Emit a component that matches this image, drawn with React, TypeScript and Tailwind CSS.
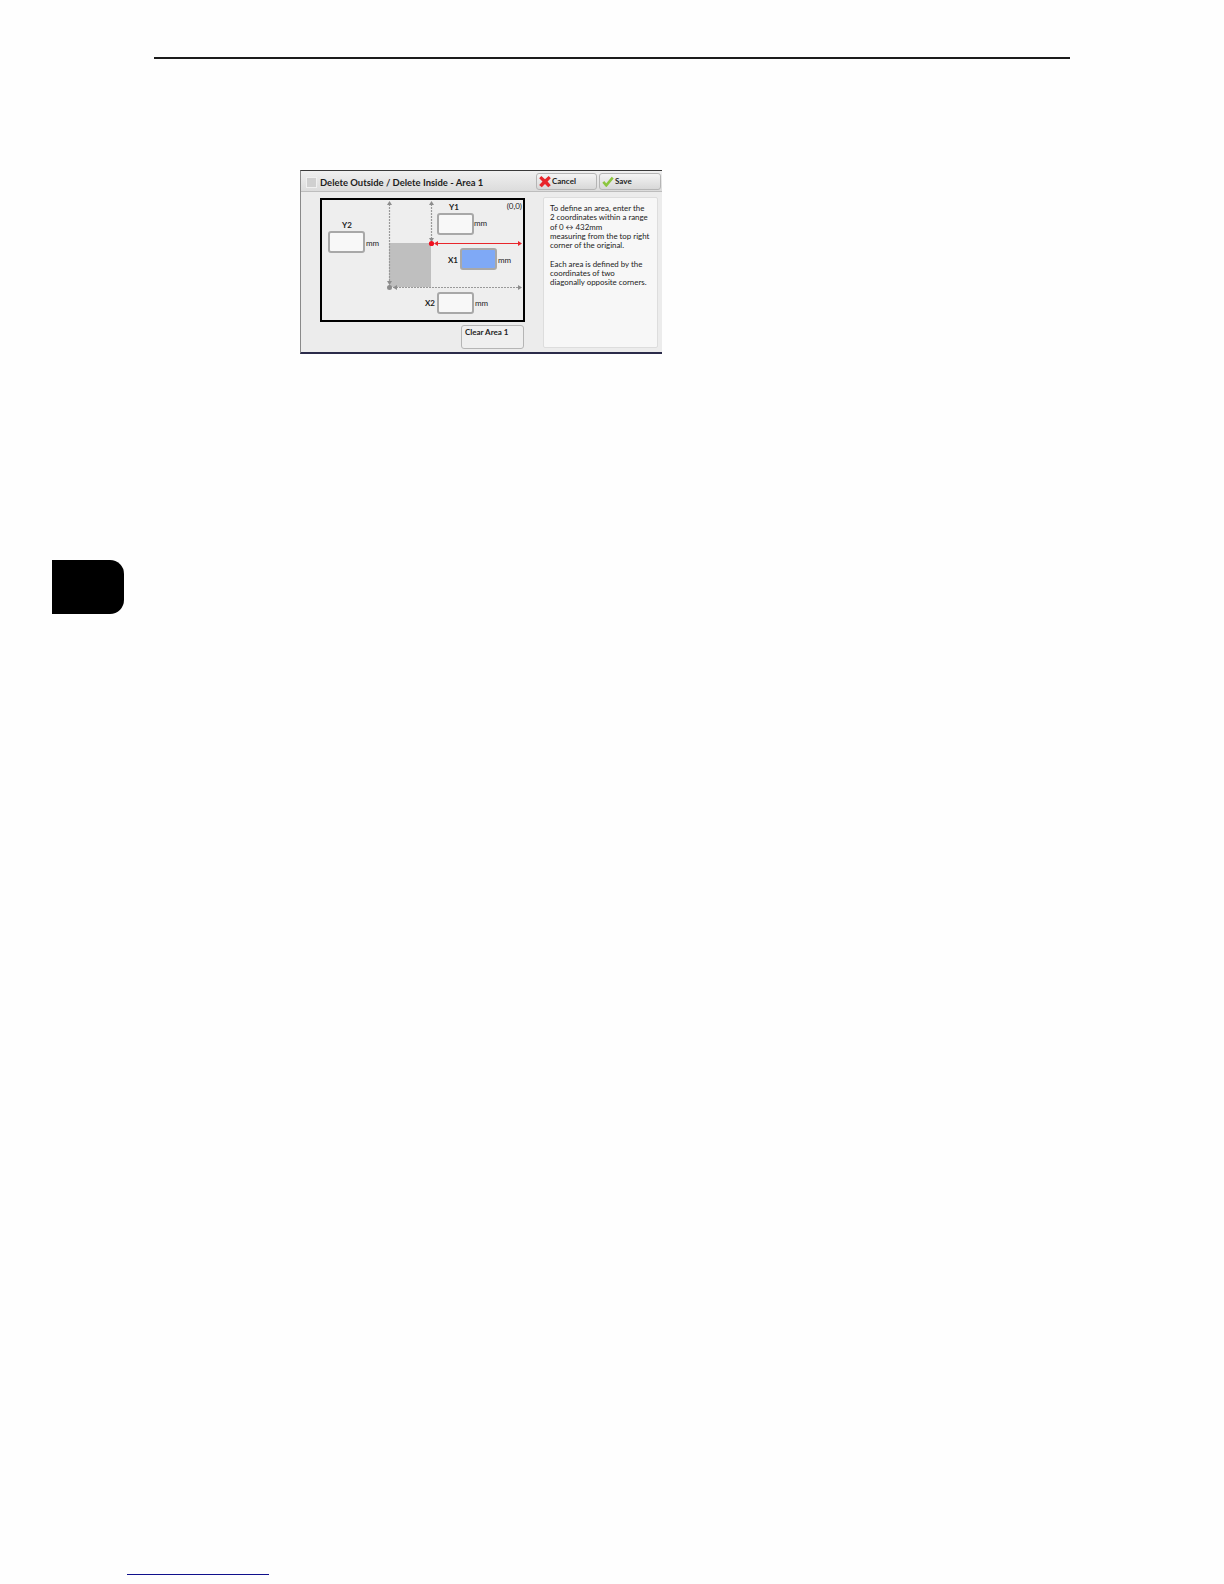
function Field({ cls, blue }: { cls: string; blue?: boolean }) {
  return (
    <div className={`absolute w-[37px] h-[22px] rounded-[3px] border-2 border-[#a8a8a8] ${blue ? "bg-[#7fa9f6]" : "bg-[#f8f8f8]"} ${cls}`} />
  );
}

function Label({ cls, children, bold }: { cls: string; children: string; bold?: boolean }) {
  return (
    <span className={`absolute text-[8px] leading-[10px] whitespace-nowrap text-[#222] ${bold ? "font-bold" : ""} ${cls}`}>
      {children}
    </span>
  );
}

function DiagramLines() {
  return (
    <svg className="absolute left-[-1px] top-[-1px]" width="205" height="122" viewBox="0 0 205 122" fill="none">
      <rect x="68" y="44" width="42" height="44" fill="#bfbfbf" />
      <g stroke="#999999" strokeWidth="1.2" strokeDasharray="2 1">
        <path d="M68.5 5V88" />
        <path d="M110.5 5V44" />
        <path d="M72 88.5H199" />
      </g>
      <g fill="#8c8c8c">
        <path d="M68.5 2l2.5 4h-5z" />
        <path d="M110.5 2l2.5 4h-5z" />
        <path d="M110.5 43l2.5-4h-5z" />
        <path d="M68.5 86l2.5-4h-5z" />
        <path d="M72 88.5l4-2.5v5z" />
        <path d="M201 88.5l-4-2.5v5z" />
        <circle cx="68.5" cy="88.5" r="2.5" />
      </g>
      <path d="M114 44.5H199" stroke="#e8262c" strokeWidth="1.2" />
      <path d="M113 44.5l4-2.5v5zM201 44.5l-4-2.5v5z" fill="#e8262c" />
      <circle cx="110.5" cy="44.5" r="2.6" fill="#f01020" />
    </svg>
  );
}

export default function App() {
  return (
    <div className="w-[1224px] h-[1584px] bg-[#fefefe] overflow-hidden flex flex-col items-start font-['Lato','Noto_Sans',sans-serif]">
      <div className="ml-[154px] mt-[57px] w-[916px] h-[2px] bg-[#1c1c1c]" />

      <div className="ml-[300px] mt-[111px] w-[362px] h-[184px] flex flex-col bg-[#ececec] border-t border-t-[#3a3a3a] border-l border-l-[#8a8a8a] border-b-2 border-b-[#2b2b4a]">
        <div className="h-[21px] flex items-center bg-gradient-to-b from-[#f0f0f0] to-[#dcdcdc] border-b border-[#bdbdbd] shrink-0">
          <div className="ml-[5px] mt-[2px] w-[11px] h-[11px] bg-[#d0d0d0] border border-[#f0f0f0]" />
          <span className="ml-[3px] mt-[3px] text-[9.45px] font-bold leading-none text-[#1d1d1d] whitespace-nowrap">
            Delete Outside / Delete Inside - Area 1
          </span>
          <div className="ml-auto flex gap-[2px] mr-[1px]">
            <div className="w-[61px] h-[17px] flex items-center rounded-[3px] border border-[#b5b5b5] bg-gradient-to-b from-[#f4f4f4] to-[#d8d8d8]">
              <svg className="ml-[2px]" width="12" height="13" viewBox="0 0 13 13">
                <path d="M2.5 .5L6.5 4 10.5 .5 12.8 3 9.3 6.5 12.8 10.5 10 12.8 6.5 9.3 3 12.8 .2 10.2 3.8 6.5 .2 3z" fill="#e8252b" />
              </svg>
              <span className="ml-[1px] text-[8px] font-bold text-[#222] leading-none">Cancel</span>
            </div>
            <div className="w-[62px] h-[17px] flex items-center rounded-[3px] border border-[#b5b5b5] bg-gradient-to-b from-[#f4f4f4] to-[#d8d8d8]">
              <svg className="ml-[2px]" width="12" height="11" viewBox="0 0 14 12" fill="none">
                <path d="M1.5 6.5L5 10.5 12.5 1.5" stroke="#8cc63f" strokeWidth="3" />
              </svg>
              <span className="ml-[1px] text-[8px] font-bold text-[#222] leading-none">Save</span>
            </div>
          </div>
        </div>

        <div className="flex items-start flex-1">
          <div className="ml-[19px] mt-[6px] flex flex-col items-end">
            <div className="relative w-[205px] h-[124px] border-2 border-black bg-[#eeeeee]">
              <DiagramLines />
              <Label bold cls="left-[20px] top-[20px]">Y2</Label>
              <Field cls="left-[6px] top-[31px]" />
              <Label cls="left-[44px] top-[38px]">mm</Label>

              <Label bold cls="left-[127px] top-[2px]">Y1</Label>
              <Field cls="left-[115px] top-[13px]" />
              <Label cls="left-[152px] top-[18px]">mm</Label>
              <Label cls="right-[1px] top-[1px]">(0,0)</Label>

              <Label bold cls="left-[126px] top-[55px]">X1</Label>
              <Field blue cls="left-[138px] top-[48px]" />
              <Label cls="left-[176px] top-[55px]">mm</Label>

              <Label bold cls="left-[103px] top-[98px]">X2</Label>
              <Field cls="left-[115px] top-[92px]" />
              <Label cls="left-[153px] top-[98px]">mm</Label>
            </div>
            <div className="mt-[3px] mr-[1px] w-[63px] h-[24px] rounded-[3px] border border-[#b5b5b5] bg-[#efefef] px-[3px] pt-[1px] text-[8px] font-bold leading-[10px] text-[#222]">
              Clear Area 1
            </div>
          </div>
          <div className="ml-[18px] mt-[5px] w-[115px] h-[151px] bg-[#f7f7f7] border border-[#dddddd] rounded-[2px] pl-[6px] pt-[6px] text-[7.9px] leading-[9.3px] text-[#222]">
            <p className="whitespace-nowrap">To define an area, enter the</p>
            <p className="whitespace-nowrap">2 coordinates within a range</p>
            <p className="whitespace-nowrap">of 0 ↔ 432mm</p>
            <p className="whitespace-nowrap">measuring from the top right</p>
            <p className="whitespace-nowrap">corner of the original.</p>
            <p className="mt-[9.3px] whitespace-nowrap">Each area is defined by the</p>
            <p className="whitespace-nowrap">coordinates of two</p>
            <p className="whitespace-nowrap">diagonally opposite corners.</p>
          </div>
        </div>
      </div>

      <div className="ml-[52px] mt-[206px] w-[72px] h-[54px] bg-black rounded-r-[14px]" />

      <div className="ml-[127px] mt-[960px] w-[142px] h-[1px] bg-[#10108c]" />
    </div>
  );
}
